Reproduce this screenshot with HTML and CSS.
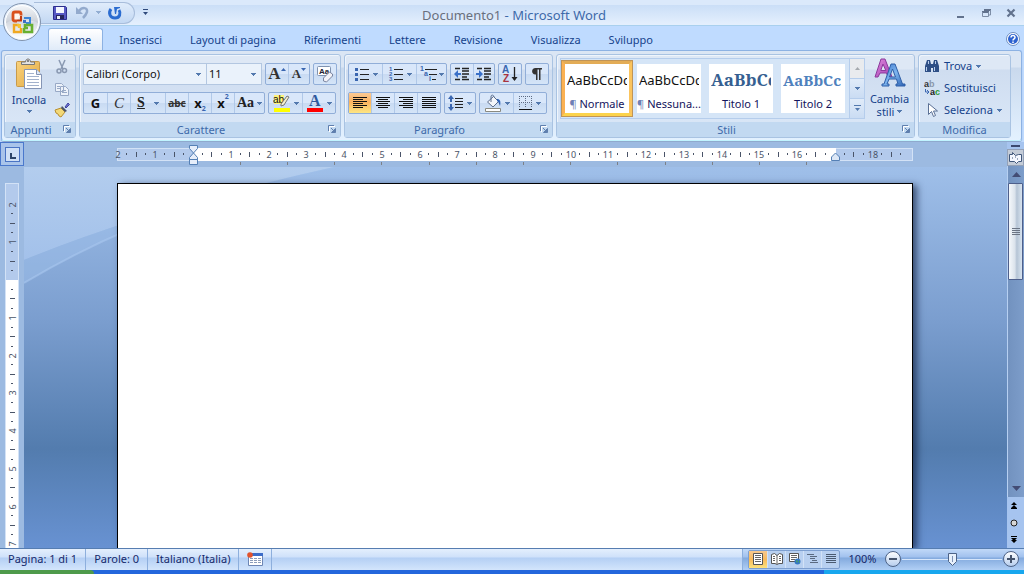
FILE: index.html
```html
<!DOCTYPE html>
<html lang="it">
<head>
<meta charset="utf-8">
<title>Documento1 - Microsoft Word</title>
<link rel="stylesheet" href="styles.css">
</head>
<body>
<svg class="defs" aria-hidden="true">
  <defs>
    <symbol id="caret" viewBox="0 0 5 3"><path d="M0 0h5v1H4v1H3v1H2V2H1V1H0z" fill="#5379ae"/></symbol>
    <symbol id="launch" viewBox="0 0 8 8"><path d="M.5 6V.5H6" fill="none" stroke="#5f7fae"/><path d="M1.500 7V1.500H7" fill="none" stroke="#fff"/><path d="M3 3l2 2M7.500 3.500v4h-4z" fill="#5f7fae" stroke="#5f7fae"/></symbol>
    <linearGradient id="orb" x2="0" y2="1"><stop offset="0" stop-color="#f4f6f9"/><stop offset=".48" stop-color="#cdd2da"/><stop offset=".52" stop-color="#b4bcc8"/><stop offset="1" stop-color="#fff"/></linearGradient>
    <linearGradient id="knob" x2="0" y2="1"><stop offset="0" stop-color="#fff"/><stop offset="1" stop-color="#b5cdee"/></linearGradient>
    <linearGradient id="swoosh" x2="0" y2="1"><stop offset="0" stop-color="#b3cdee"/><stop offset="1" stop-color="#a3c1ea"/></linearGradient>
    <linearGradient id="clip" x2="1" y2="1"><stop offset="0" stop-color="#f9d27e"/><stop offset="1" stop-color="#e2ab45"/></linearGradient>
    <linearGradient id="letterP" x2="1" y2="1"><stop offset="0" stop-color="#e089de"/><stop offset="1" stop-color="#a03fb0"/></linearGradient>
    <linearGradient id="letterB" x2="1" y2="1"><stop offset="0" stop-color="#3d77cc"/><stop offset=".5" stop-color="#7db4ee"/><stop offset="1" stop-color="#2c62b4"/></linearGradient>
  </defs>
</svg>

<header class="titlebar">
  <button class="orb" aria-label="Pulsante Office">
    <svg width="40" height="40" viewBox="0 0 40 40">
      <circle cx="20" cy="20" r="18.500" fill="#e8f1fc" stroke="#8193ad"/>
      <circle cx="20" cy="20" r="16.500" fill="url(#orb)" stroke="#fff"/>
      <path d="M3 21c9-4 25-4 34 0a17 17 0 0 1-34 0z" fill="#fff" opacity=".45"/>
      <path d="M19 13.500V12q0-2-2-2h-4q-2 0-2 2v5q0 2 2 2h2" fill="#fff6ee" stroke="#d9501c" stroke-width="2.800"/>
      <path d="M15 18.500h4V14" fill="none" stroke="#c23c12" stroke-width="2"/>
      <path d="M22 16h6v5h-4" fill="none" stroke="#3d86d8" stroke-width="2"/>
      <path d="M21 18h3v3h-3z" fill="#3d6fc4"/>
      <path d="M17 23h-5v7h7v-4" fill="none" stroke="#f0a821" stroke-width="2.400"/>
      <path d="M15 22h4v4h-3z" fill="#f6c430"/>
      <path d="M22 26v4h8v-7h-7v3h3" fill="none" stroke="#68b030" stroke-width="2.600"/>
    </svg>
  </button>
  <div class="quick">
    <div class="quick-pill">
      <button aria-label="Salva"><svg width="16" height="16" viewBox="0 0 16 16"><path d="M1.500 1.500h12l1 1v12h-13z" fill="#5658c4" stroke="#2c2e8e"/><path d="M4 2h8v6H4z" fill="#f3f6ff"/><path d="M4 10h8v4H4z" fill="#25255c"/><path d="M5 11h3v3H5z" fill="#e7ebf5"/></svg></button>
      <button aria-label="Annulla"><svg width="16" height="16" viewBox="0 0 16 16"><path d="M5 6c3-4 9-4 8 1-1 3-2 4-4 6" fill="none" stroke="#93aacd" stroke-width="2.500"/><path d="M2 2v7h7z" fill="#93aacd"/></svg></button>
      <svg class="caret pale" width="5" height="3"><use href="#caret"/></svg>
      <button aria-label="Ripeti"><svg width="16" height="16" viewBox="0 0 16 16"><path d="M4 4c-3 4-1 9 4 9 5 0 6-5 4-8" fill="none" stroke="#2b6cd0" stroke-width="3"/><path d="M7 2h6v1l-3 1-1 5H8z" fill="#2b6cd0"/></svg></button>
    </div>
    <button class="customize" aria-label="Personalizza"><svg width="7" height="7" viewBox="0 0 7 7"><path d="M1 0h5v1H1zM1 3h5L3.500 6z" fill="#2f4a7c"/></svg></button>
  </div>
  <h1 class="title"><span class="doc">Documento1</span> - Microsoft Word</h1>
  <div class="window-buttons">
    <button aria-label="Riduci a icona"><svg width="10" height="12" viewBox="0 0 10 12"><path d="M1 9h7v2H1z" fill="#62728d"/></svg></button>
    <button aria-label="Ripristina"><svg width="10" height="12" viewBox="0 0 10 12"><path d="M3 2h7v2H3zM1 4h7v2H1z" fill="#62728d"/><path d="M9.500 3v5H8M1.500 5v4.500h6V5" fill="none" stroke="#7d8da6"/></svg></button>
    <button aria-label="Chiudi"><svg width="10" height="12" viewBox="0 0 10 12"><path d="M1.500 2.500l7 7M8.500 2.500l-7 7" stroke="#62728d" stroke-width="2.200"/></svg></button>
  </div>
</header>

<nav class="tabs">
  <a class="tab active" href="#home">Home</a>
  <a class="tab" href="#inserisci">Inserisci</a>
  <a class="tab" href="#layout">Layout di pagina</a>
  <a class="tab" href="#riferimenti">Riferimenti</a>
  <a class="tab" href="#lettere">Lettere</a>
  <a class="tab" href="#revisione">Revisione</a>
  <a class="tab" href="#visualizza">Visualizza</a>
  <a class="tab" href="#sviluppo">Sviluppo</a>
  <button class="help" aria-label="Guida"><svg width="14" height="14" viewBox="0 0 14 14"><circle cx="7" cy="7" r="6.500" fill="#fff" stroke="#6f8fc0"/><circle cx="7" cy="7" r="5" fill="#2d62cf"/><path d="M5 5.500c0-3 4.200-2.500 4 0C9 7 7 6.800 7 8.500M7 9.500V11" fill="none" stroke="#fff" stroke-width="1.500"/></svg></button>
</nav>

<div class="ribbon" id="home">
  <section class="group clipboard">
    <div class="content">
      <button class="paste">
        <svg width="28" height="32" viewBox="0 0 28 32"><rect x="1.500" y="3.500" width="23" height="25" rx="1" fill="url(#clip)" stroke="#c89a4a"/><path d="M6.500 6.500V4h4c0-4 5-4 5 0h4v2.500z" fill="#e2e2e2" stroke="#777"/><circle cx="13" cy="3" r="1" fill="#666"/><path d="M9.500 11.500h12l5 5v14h-17z" fill="#fff" stroke="#8595b5"/><path d="M21.500 11.500v5h5" fill="#dfe8f6" stroke="#8595b5"/><path d="M12 15.500h7M12 18.500h12M12 21.500h12M12 24.500h12M12 27.500h12" stroke="#a3b2cc"/></svg>
        <span>Incolla</span>
        <svg class="caret" width="5" height="3"><use href="#caret"/></svg>
      </button>
      <div class="clip-tools">
        <button aria-label="Taglia"><svg width="14" height="16" viewBox="0 0 14 16"><path d="M4 1l4 9M10 1L6 10" stroke="#8998b1" stroke-width="1.500"/><circle cx="4" cy="12" r="2" fill="none" stroke="#8998b1" stroke-width="1.500"/><circle cx="9.500" cy="11.500" r="2" fill="none" stroke="#8998b1" stroke-width="1.500"/></svg></button>
        <button aria-label="Copia"><svg width="16" height="16" viewBox="0 0 16 16"><path d="M1.500 2.500h6l2 2v6h-8zM6.500 5.500h5l3 3v6h-8z" fill="#edf2fa" stroke="#98a9c6"/><path d="M3 5.500h3M3 7.500h3M8 9.500h4M8 11.500h5" stroke="#98a9c6"/></svg></button>
        <button aria-label="Copia formato"><svg width="16" height="16" viewBox="0 0 16 16"><path d="M1 8l6-2 4 4-4 5-2-1-1-2-2-1z" fill="#f2d878" stroke="#b98f30"/><path d="M8 4l5 5-2 1-4-4z" fill="#4c5568"/><path d="M11 5l3-4 1.500 1.500L12 6z" fill="#6a6fd0" stroke="#4145a0"/></svg></button>
      </div>
    </div>
    <h2 class="with-launcher"><span>Appunti</span><button class="launcher" aria-label="Opzioni Appunti"><svg width="8" height="8"><use href="#launch"/></svg></button></h2>
  </section>

  <section class="group font">
    <div class="content rows">
      <div class="row">
        <div class="combos">
          <label class="combo family"><select aria-label="Tipo di carattere"><option>Calibri (Corpo)</option></select><svg class="caret" width="5" height="3"><use href="#caret"/></svg></label>
          <label class="combo size"><select aria-label="Dimensione carattere"><option>11</option></select><svg class="caret" width="5" height="3"><use href="#caret"/></svg></label>
        </div>
        <div class="set">
          <button class="b22 serif big" aria-label="Ingrandisci carattere">A<svg width="5" height="12" viewBox="0 0 5 12"><path d="M0 3L2.500 0 5 3z" fill="#3a66b0"/></svg></button>
          <button class="b21 serif mid" aria-label="Riduci carattere">A<svg width="5" height="12" viewBox="0 0 5 12"><path d="M0 0h5L2.500 3z" fill="#3a66b0"/></svg></button>
        </div>
        <div class="set">
          <button class="b22" aria-label="Cancella formattazione"><svg width="18" height="18" viewBox="0 0 18 18"><rect x="1.500" y="1.500" width="13" height="9" rx="1" fill="#fff" stroke="#8093b0"/><text x="3" y="9" font-size="8" font-weight="bold" font-family="Liberation Sans" fill="#223">Aa</text><path d="M7.500 13l6-6 3 2v2l-6 6-3-1z" fill="#f2f2f8" stroke="#7a84a0"/></svg></button>
        </div>
      </div>
      <div class="row">
        <div class="set">
          <button class="b23 bold" aria-label="Grassetto">G</button>
          <button class="b23 italic" aria-label="Corsivo">C</button>
          <button class="b35 under" aria-label="Sottolineato"><u>S</u><svg class="caret" width="5" height="3"><use href="#caret"/></svg></button>
          <button class="b23 strike" aria-label="Barrato"><s>abc</s></button>
          <button class="b23 script" aria-label="Pedice">x<sub>2</sub></button>
          <button class="b23 script" aria-label="Apice">x<sup>2</sup></button>
          <button class="b30 case" aria-label="Maiuscole/minuscole">Aa<svg class="caret" width="5" height="3"><use href="#caret"/></svg></button>
        </div>
        <div class="set">
          <button class="b33" aria-label="Evidenziatore"><svg width="18" height="18" viewBox="0 0 18 18"><path d="M1 1h10v9H1z" fill="#fff27a"/><text x="0" y="9" font-size="10" font-family="Liberation Sans" fill="#111">ab</text><path d="M8 10l6-8 2 1-5 8-3 1z" fill="#f5f1d0" stroke="#777"/><path d="M1 14h16v4H1z" fill="#ff0"/></svg><svg class="caret" width="5" height="3"><use href="#caret"/></svg></button>
          <button class="b33" aria-label="Colore carattere"><svg width="18" height="18" viewBox="0 0 18 18"><text x="3" y="12" font-size="16" font-weight="bold" font-family="Liberation Serif" fill="#2f5a9e">A</text><path d="M1 14h16v4H1z" fill="#f00"/></svg><svg class="caret" width="5" height="3"><use href="#caret"/></svg></button>
        </div>
      </div>
    </div>
    <h2 class="with-launcher"><span>Carattere</span><button class="launcher" aria-label="Opzioni Carattere"><svg width="8" height="8"><use href="#launch"/></svg></button></h2>
  </section>

  <section class="group para">
    <div class="content rows">
      <div class="row">
        <div class="set">
          <button class="b33" aria-label="Elenchi puntati"><svg width="16" height="16" viewBox="0 0 16 16"><path d="M1 2h3v3H1zM1 7h3v3H1zM1 12h3v3H1z" fill="#3a66b0"/><path d="M6 3.500h9M6 8.500h9M6 13.500h9" stroke="#222"/></svg><svg class="caret" width="5" height="3"><use href="#caret"/></svg></button>
          <button class="b34" aria-label="Elenchi numerati"><svg width="16" height="16" viewBox="0 0 16 16"><g font-size="6" font-weight="bold" font-family="Liberation Sans" fill="#3a66b0"><text x="1" y="5">1</text><text x="1" y="10">2</text><text x="1" y="15">3</text></g><path d="M6 3.500h9M6 8.500h9M6 13.500h9" stroke="#222"/></svg><svg class="caret" width="5" height="3"><use href="#caret"/></svg></button>
          <button class="b30 tight" aria-label="Elenco a più livelli"><svg width="18" height="16" viewBox="0 0 18 16"><g font-size="7" font-weight="bold" font-family="Liberation Sans" fill="#3a66b0"><text x="0" y="5">1</text><text x="4" y="10">a</text><text x="9" y="15">i</text></g><path d="M5 3.500h12M9 8.500h8M12 13.500h4" stroke="#222"/></svg><svg class="caret" width="5" height="3"><use href="#caret"/></svg></button>
        </div>
        <div class="set">
          <button class="b22" aria-label="Riduci rientro"><svg width="16" height="16" viewBox="0 0 16 16"><path d="M1 2.500h5M8 2.500h7M8 5h7M8 8h7M8 11h5M1 13.500h5M8 13.500h7" stroke="#222" stroke-width="1.500"/><path d="M0 8l4-4v3h3v2H4v3z" fill="#3a70c8"/></svg></button>
          <button class="b21" aria-label="Aumenta rientro"><svg width="16" height="16" viewBox="0 0 16 16"><path d="M1 2.500h5M8 2.500h7M8 5h7M8 8h7M8 11h5M1 13.500h5M8 13.500h7" stroke="#222" stroke-width="1.500"/><path d="M7 8L3 4v3H0v2h3v3z" fill="#3a70c8"/></svg></button>
        </div>
        <div class="set">
          <button class="b22" aria-label="Ordina"><svg width="16" height="18" viewBox="0 0 16 18"><g font-size="10" font-weight="bold" font-family="Liberation Sans"><text x="0" y="8" fill="#3a66b0">A</text><text x="1" y="17" fill="#a83240">Z</text></g><path d="M12.500 2v13" stroke="#222" stroke-width="1.300"/><path d="M9.500 12h6l-3 4z" fill="#222"/></svg></button>
        </div>
        <div class="set">
          <button class="b22" aria-label="Mostra tutto"><svg width="14" height="14" viewBox="0 0 14 14"><path d="M12 1H5.500C1 1 1 7.500 5.500 7.500H6V13h1.500V2.500H9V13h1.500V2.500H12z" fill="#333"/></svg></button>
        </div>
      </div>
      <div class="row">
        <div class="set">
          <button class="b22 on" aria-label="Allinea a sinistra"><svg width="14" height="14" viewBox="0 0 14 14"><path d="M0 1.500h14M0 3.500h10M0 5.500h14M0 7.500h10M0 9.500h14M0 11.500h10" stroke="#111"/></svg></button>
          <button class="b23" aria-label="Centra"><svg width="14" height="14" viewBox="0 0 14 14"><path d="M0 1.500h14M2 3.500h10M0 5.500h14M2 7.500h10M0 9.500h14M2 11.500h10" stroke="#111"/></svg></button>
          <button class="b23" aria-label="Allinea a destra"><svg width="14" height="14" viewBox="0 0 14 14"><path d="M0 1.500h14M4 3.500h10M0 5.500h14M4 7.500h10M0 9.500h14M4 11.500h10" stroke="#111"/></svg></button>
          <button class="b23" aria-label="Giustifica"><svg width="14" height="14" viewBox="0 0 14 14"><path d="M0 1.500h14M0 3.500h14M0 5.500h14M0 7.500h14M0 9.500h14M0 11.500h14" stroke="#111"/></svg></button>
        </div>
        <div class="set">
          <button class="b30" aria-label="Interlinea"><svg width="16" height="16" viewBox="0 0 16 16"><path d="M3 0l3 4H4v3H2V4H0zM3 16l3-4H4V9H2v3H0z" fill="#3a66b0"/><path d="M7 3.500h8M7 6.500h8M7 9.500h8M7 12.500h8" stroke="#222"/></svg><svg class="caret" width="5" height="3"><use href="#caret"/></svg></button>
        </div>
        <div class="set">
          <button class="b33" aria-label="Sfondo"><svg width="18" height="18" viewBox="0 0 18 18"><path d="M3.500 8l6-5.500 5 5L9 13z" fill="#f4f6fa" stroke="#5c6d8c"/><path d="M7 8V3c0-3 3-2 3 0" fill="none" stroke="#5c6d8c"/><path d="M13 5c3 0 4 2 3 7-1-2-1-4-3-5z" fill="#2f62b5"/><path d="M1.500 14.500h15v3h-15z" fill="#fff" stroke="#8a8a80"/></svg><svg class="caret" width="5" height="3"><use href="#caret"/></svg></button>
          <button class="b33" aria-label="Bordi"><svg width="14" height="14" viewBox="0 0 14 14"><path d="M.5 0v12M6.500 0v12M12.500 0v12M0 .5h13M0 6.500h13" stroke="#5c6b84" stroke-dasharray="1 1"/><path d="M0 13.500h13" stroke="#111"/></svg><svg class="caret" width="5" height="3"><use href="#caret"/></svg></button>
        </div>
      </div>
    </div>
    <h2 class="with-launcher"><span>Paragrafo</span><button class="launcher" aria-label="Opzioni Paragrafo"><svg width="8" height="8"><use href="#launch"/></svg></button></h2>
  </section>

  <section class="group styles">
    <div class="content">
      <div class="gallery">
        <button class="style selected"><span class="sample">AaBbCcDd</span><span class="name"><i>¶</i> Normale</span></button>
        <button class="style"><span class="sample">AaBbCcDd</span><span class="name"><i>¶</i> Nessuna...</span></button>
        <button class="style"><span class="sample heading one">AaBbCc</span><span class="name">Titolo 1</span></button>
        <button class="style"><span class="sample heading two">AaBbCc</span><span class="name">Titolo 2</span></button>
        <div class="gallery-nav">
          <button class="off" aria-label="Riga precedente"><svg width="5" height="3" viewBox="0 0 5 3"><path d="M0 3L2.500 0 5 3z" fill="#a5a9ae"/></svg></button>
          <button aria-label="Riga successiva"><svg width="5" height="3"><use href="#caret"/></svg></button>
          <button aria-label="Altro"><svg width="7" height="7" viewBox="0 0 7 7"><path d="M0 0h7v1H0zM1 3h5L3.500 6z" fill="#5379ae"/></svg></button>
        </div>
      </div>
      <button class="change">
        <svg width="32" height="30" viewBox="0 0 32 30"><path fill-rule="evenodd" d="M7 1h4l7 18h-4l-1.500-4H6l-2 4H1zM9 6l-2.200 6.500h5z" fill="url(#letterP)" stroke="#8c3a9c"/><path fill-rule="evenodd" d="M17 6h4l7.500 20H31v2h-9v-2h2l-1.500-5h-7.500l-2 5h2v2H8v-2h2zM18.500 11L15.500 19h6z" fill="url(#letterB)" stroke="#2f5fa8"/></svg>
        <span>Cambia</span>
        <span>stili <svg class="caret" width="5" height="3"><use href="#caret"/></svg></span>
      </button>
    </div>
    <h2 class="with-launcher"><span>Stili</span><button class="launcher" aria-label="Opzioni Stili"><svg width="8" height="8"><use href="#launch"/></svg></button></h2>
  </section>

  <section class="group edit">
    <div class="content edit-list">
      <button><svg width="16" height="16" viewBox="0 0 16 16"><path d="M3 2h3l1 4v8H1V8zM10 2h3l2 6v6H9V6z" fill="#2e4f86"/><path d="M7 6h2v4H7z" fill="#2e4f86"/><path d="M2.500 9v4M10.500 9v4M4.500 3v3M11.500 3v3" stroke="#b9cdec"/></svg>Trova<svg class="caret" width="5" height="3"><use href="#caret"/></svg></button>
      <button><svg width="16" height="16" viewBox="0 0 16 16"><g font-size="9" font-weight="bold" font-family="Liberation Sans"><text x="0" y="7" fill="#333">a</text><text x="5" y="7" fill="#8a97aa">b</text><text x="6" y="15" fill="#222">a</text><text x="11" y="15" fill="#2d9b36">c</text></g><path d="M1.500 9v3h3M3 10l2 2-2 2" fill="none" stroke="#3a66b0"/></svg>Sostituisci</button>
      <button><svg width="16" height="16" viewBox="0 0 16 16"><path d="M4.500 1.500v11l3-3 2 5 2-1-2-4.500h4z" fill="#fff" stroke="#5b7095"/></svg>Seleziona<svg class="caret" width="5" height="3"><use href="#caret"/></svg></button>
    </div>
    <h2><span>Modifica</span></h2>
  </section>
</div>

<main class="workspace">
  <div class="ruler-row">
    <button class="tab-stop" aria-label="Tabulazione"><svg width="15" height="15" viewBox="0 0 15 15"><rect x=".5" y=".5" width="14" height="14" fill="#cfe0f6" stroke="#4a74c4"/><path d="M6 6v5h5" fill="none" stroke="#2c4468" stroke-width="2"/></svg></button>
    <div class="ruler-h">
      <svg id="ruler-h" width="796" height="25" viewBox="0 0 796 25">
        <rect x=".5" y="6.500" width="795" height="12" fill="#b3caec" stroke="#d3e2f6"/>
        <rect x="76" y="6" width="643" height="13" fill="#fff"/>
        <g class="marks"></g>
        <path d="M72.500 3.500h8v3l-4 4.500-4-4.500zM76.500 11l4 4.500v2h-8v-2zM72.500 17.500h8v5h-8z" fill="#e6eefa" stroke="#5580b5"/>
        <path d="M718.500 11l4 4v3.500h-8V15z" fill="#dce7f6" stroke="#5580b5"/>
      </svg>
    </div>
  </div>
  <div class="ruler-v">
    <svg id="ruler-v" width="14" height="365" viewBox="0 0 14 365">
      <rect x=".5" y=".5" width="13" height="380" fill="#b3caec" stroke="#d3e2f6"/>
      <rect x="1" y="97" width="12" height="300" fill="#fff"/>
      <g class="marks"></g>
    </svg>
  </div>
  <div class="canvas">
    <svg class="swoosh" width="320" height="120" viewBox="0 0 320 120" aria-hidden="true">
      <path d="M0 0h310Q130 40 0 93z" fill="url(#swoosh)"/>
      <path d="M0 93Q130 40 310 0H320Q150 28 0 116z" fill="#a0c0ea" opacity=".45"/>
      <path d="M0 116Q80 68 170 38" fill="none" stroke="#a8c6ee" stroke-width="2" opacity=".6"/>
    </svg>
    <article class="page" contenteditable="true" aria-label="Documento"></article>
  </div>
  <aside class="scroll">
    <button class="split" aria-label="Dividi"><svg width="9" height="2"><path d="M0 0h9v2H0z" fill="#3c4a70"/></svg></button>
    <button class="ruler-toggle" aria-label="Righello"><svg width="13" height="12" viewBox="0 0 13 12"><path d="M.5 2.500h3v-2l3 3 3-1h3v7h-3l-2 2-2-2h-5z" fill="#f4f7ff" stroke="#41587c"/><path d="M3 6h1M6 5h1M8 7h1" stroke="#41587c"/></svg></button>
    <div class="track">
      <button aria-label="Su"><svg width="9" height="5" viewBox="0 0 9 5"><path d="M0 5l4.500-5L9 5z" fill="#434c74"/></svg></button>
      <div class="thumb"><svg width="8" height="8" viewBox="0 0 8 8"><path d="M0 .5h8M0 2.500h8M0 4.500h8M0 6.500h8" stroke="#6c7584"/></svg></div>
      <button class="down" aria-label="Giù"><svg width="9" height="5" viewBox="0 0 9 5"><path d="M0 0h9L4.500 5z" fill="#434c74"/></svg></button>
    </div>
    <button class="browse" aria-label="Pagina precedente"><svg width="6" height="8" viewBox="0 0 6 8"><path d="M3 0l3 3H0zM3 3l3 3H0zM0 6h6v1H0z"/></svg></button>
    <button class="browse" aria-label="Seleziona oggetto"><svg width="8" height="8" viewBox="0 0 8 8"><circle cx="4" cy="4" r="3" fill="#d6d6d6" stroke="#222"/></svg></button>
    <button class="browse" aria-label="Pagina successiva"><svg width="6" height="8" viewBox="0 0 6 8"><path d="M0 0h6v1H0zM0 2h6L3 5zM0 4h6L3 7z"/></svg></button>
  </aside>
</main>

<footer class="status">
  <div class="status-left">
    <button>Pagina: 1 di 1</button>
    <button>Parole: 0</button>
    <button>Italiano (Italia)</button>
    <button aria-label="Macro"><svg width="16" height="14" viewBox="0 0 16 14"><path d="M1.500 1.500h14v12h-14z" fill="#fff" stroke="#6d86b5"/><path d="M2 1h14v3H2z" fill="#3c6cc8"/><path d="M3 6.500h3M7 6.500h3M11 6.500h3M3 8.500h3M7 8.500h3M11 8.500h3M3 10.500h3M7 10.500h3M11 10.500h3" stroke="#8b9cba"/><circle cx="3" cy="3" r="2.800" fill="#e2532c"/></svg></button>
  </div>
  <div class="status-right">
    <div class="views">
      <button class="on" aria-label="Layout di stampa"><svg width="12" height="12" viewBox="0 0 12 12"><path d="M1.500.5h9v11h-9z" fill="#fff" stroke="#555"/><path d="M3 2.500h6M3 4.500h6M3 6.500h6M3 8.500h6" stroke="#666"/></svg></button>
      <button aria-label="Lettura a schermo intero"><svg width="12" height="12" viewBox="0 0 12 12"><path d="M.5 1.500l3-1 2.500 2 2.500-2 3 1v9H8l-2 1-2-1H.5z" fill="#fff" stroke="#555"/><path d="M6 2v9M2 3.500h2M2 5.500h2M2 7.500h2M8 3.500h2M8 5.500h2M8 7.500h2" stroke="#666"/></svg></button>
      <button aria-label="Layout Web"><svg width="12" height="12" viewBox="0 0 12 12"><path d="M.5.500h9v8h-9z" fill="#fff" stroke="#555"/><path d="M2 2.500h6M2 4.500h6M2 6.500h4" stroke="#666"/><circle cx="8.500" cy="8.500" r="3" fill="#3477c4"/><path d="M7 7l2 1-1 2zM10 7l1 2-1 1z" fill="#4fae4a"/></svg></button>
      <button aria-label="Struttura"><svg width="12" height="12" viewBox="0 0 12 12"><path d="M0 1.500h7M3 3.500h7M3 5.500h5M5 7.500h5M3 9.500h8" stroke="#5a6a80"/></svg></button>
      <button aria-label="Bozza"><svg width="12" height="12" viewBox="0 0 12 12"><path d="M1 1.500h10M1 3.500h10M1 5.500h10M1 7.500h10M1 9.500h10" stroke="#4a5a70"/></svg></button>
    </div>
    <button class="percent">100%</button>
    <button class="round" aria-label="Zoom indietro"><svg width="16" height="16" viewBox="0 0 16 16"><circle cx="8" cy="8" r="7.500" fill="url(#knob)" stroke="#4d6387"/><path d="M4 8h8" stroke="#44536c" stroke-width="2"/></svg></button>
    <input class="zoom" type="range" min="0" max="100" value="50" aria-label="Zoom">
    <button class="round" aria-label="Zoom avanti"><svg width="16" height="16" viewBox="0 0 16 16"><circle cx="8" cy="8" r="7.500" fill="url(#knob)" stroke="#4d6387"/><path d="M4 8h8M8 4v8" stroke="#44536c" stroke-width="2"/></svg></button>
  </div>
</footer>
<div class="taskbar"><span class="start"></span><span class="tray"></span></div>
<script src="ruler.js"></script>
</body>
</html>
```

FILE: styles.css
```css
* { box-sizing: border-box; }

body {
  margin: 0;
  min-height: 100vh;
  display: flex;
  flex-direction: column;
  background: #bfdbff;
  color: #15428b;
  font: 11px/14px "Noto Sans", "Open Sans", sans-serif;
}

button {
  margin: 0;
  padding: 0;
  border: 0;
  background: none;
  color: inherit;
  font: inherit;
  display: flex;
  align-items: center;
  justify-content: center;
}

svg { display: block; flex: none; }
.defs { position: absolute; width: 0; height: 0; }
.pale { opacity: .5; }

/* title bar */
.titlebar {
  position: relative;
  height: 26px;
  display: grid;
  grid-template-columns: 1fr auto 1fr;
  align-items: center;
  background: linear-gradient(#dbe9fb 0 5px, #cadef7 5px, #e4effd 24px);
  border-bottom: 1px solid #a9d0ee;
}
.orb { position: absolute; left: 2px; top: 2px; z-index: 2; }
.quick { display: flex; align-items: center; gap: 4px; padding-left: 34px; }
.quick-pill {
  display: flex;
  align-items: center;
  gap: 6px;
  height: 22px;
  padding: 0 11px 0 18px;
  border: 1px solid #a8bddb;
  border-left: 0;
  border-radius: 0 11px 11px 0;
  background: linear-gradient(#e0ecfb, #c3d8f3);
}
.customize { width: 12px; height: 16px; }
.title { margin: 0; padding: 4px 0 0 4px; font-size: 13px; line-height: 18px; font-weight: 400; color: #3e6aaa; }
.title .doc { color: #69707e; }
.window-buttons { display: flex; justify-content: flex-end; gap: 15px; padding-right: 8px; }

/* tab strip */
.tabs { display: flex; height: 24px; padding: 2px 4px 0 48px; }
.tab { padding: 5px 14px 0; color: inherit; text-decoration: none; }
.tab.active {
  margin-right: 2px;
  padding: 4px 11px 0;
  border: 1px solid #8db2e3;
  border-bottom: 0;
  border-radius: 3px 3px 0 0;
  background: linear-gradient(#fff, #e0ebf9);
}
.help { margin-left: auto; align-self: center; }

/* ribbon */
.ribbon {
  display: flex;
  gap: 3px;
  margin: 0 2px 0 1px;
  padding: 3px 2px 2px;
  border: 1px solid #8db2e3;
  border-bottom-color: #c0f4ff;
  border-radius: 3px;
  background: linear-gradient(#dbe6f4 0 16px, #c9d9ed 17px, #e3f1ff);
  box-shadow: 0 1px 1px #8aa3c8;
}
.group {
  display: flex;
  flex-direction: column;
  border: 1px solid #a9c3e2;
  border-radius: 3px;
  background: linear-gradient(#dee8f5 0 14px, #cfddf0 15px, #dbe8f8);
  box-shadow: inset 1px 1px 0 #eff5fc;
}
.content { height: 67px; display: flex; padding: 3px; }
.group h2 {
  position: relative;
  height: 15px;
  margin: 0;
  background: #c2d9f1;
  color: #3e6aaa;
  font-size: 11px;
  line-height: 15px;
  font-weight: 400;
  text-align: center;
}
.group .with-launcher { padding-right: 18px; }
.launcher { position: absolute; right: 3px; top: 2px; width: 10px; height: 10px; }
.clipboard { width: 72px; }
.paste { flex-direction: column; width: 42px; gap: 3px; justify-content: flex-start; }
.clip-tools { display: flex; flex-direction: column; justify-content: space-between; padding-left: 4px; }
.clip-tools button { width: 16px; height: 18px; }

.rows { flex-direction: column; gap: 7px; padding: 8px 3px; }
.row { display: flex; gap: 3px; }
.set {
  display: flex;
  height: 22px;
  border: 1px solid #91aed8;
  border-radius: 2px;
  background: linear-gradient(#d9e7fa 0 10px, #c8daf2 10px, #d5e5f8);
}
.set button { gap: 3px; }
.set button + button { border-left: 1px solid #b0c8e8; }
.b21 { width: 21px; }
.b22 { width: 22px; }
.b23 { width: 23px; }
.b30 { width: 30px; }
.b33 { width: 33px; }
.b34 { width: 34px; }
.b35 { width: 35px; }
.set .tight { gap: 1px; }
.set .on { background: linear-gradient(#fbc994, #fbb25e 45%, #fde683); }
.combos { display: flex; }
.combo {
  display: flex;
  align-items: center;
  height: 22px;
  padding-right: 5px;
  border: 1px solid #b3c7e1;
  background: #eaf2fb;
}
.combo + .combo { border-left: 0; }
.combo select {
  flex: 1;
  min-width: 0;
  padding: 0 2px;
  border: 0;
  appearance: none;
  background: none;
  color: #111;
  font: inherit;
}
.family { width: 124px; }
.size { width: 55px; }
.serif { color: #333; font-family: "Liberation Serif", serif; font-weight: 700; }
.set .serif { gap: 0; }
.big { font-size: 17px; }
.mid { font-size: 13px; }
.bold { color: #111; font: 700 13px/16px "Open Sans", sans-serif; }
.italic { color: #333; font: italic 15px/16px "Liberation Serif", serif; }
.under { color: #222; font: 700 14px/16px "Liberation Serif", serif; }
.set .under { gap: 9px; }
.strike { color: #333; font-size: 10px; font-weight: 700; }
.script { color: #111; font-size: 13px; font-weight: 700; }
.set .script { gap: 0; }
.script sub, .script sup { color: #3a66b0; font-size: 7px; line-height: 8px; }
.script sub { align-self: flex-end; }
.script sup { align-self: flex-start; }
.case { color: #222; font: 700 14px/16px "Liberation Serif", serif; }

/* styles gallery */
.styles .content { gap: 3px; }
.gallery { display: flex; height: 61px; border: 1px solid #b5cdec; background: #d5e5f7; }
.style {
  flex-direction: column;
  justify-content: space-between;
  width: 72px;
  margin: 1px 0;
  padding: 6px 2px 2px;
  border: 4px solid transparent;
  background: #fff padding-box;
  overflow: hidden;
}
.style.selected {
  border-color: #e3ac56 #fbc45d #fcd34b #fbb152;
  outline: 1px solid #c09457;
  outline-offset: -1px;
}
.sample { align-self: flex-start; max-width: 60px; overflow: hidden; color: #111; font-size: 13px; line-height: 20px; white-space: nowrap; }
.heading { font: 700 17px/20px "Noto Serif", "Liberation Serif", serif; }
.one { color: #365f91; }
.two { color: #4f81bd; font-size: 15px; }
.name { color: #14145c; white-space: nowrap; }
.name i { color: #6f7fb5; font-style: normal; }
.gallery-nav { display: flex; flex-direction: column; width: 15px; border-left: 1px solid #b5cdec; }
.gallery-nav button { flex: 1; background: linear-gradient(#e0ebf9, #cadcf3); }
.gallery-nav button + button { border-top: 1px solid #b5cdec; }
.gallery-nav .off { background: #e9ebee; }
.change { flex-direction: column; width: 43px; justify-content: flex-start; }
.change span { display: flex; align-items: center; gap: 3px; line-height: 13px; }
.change svg + span { padding-top: 4px; }

.edit { width: 93px; }
.edit-list { flex-direction: column; justify-content: space-between; padding: 1px 5px 2px; }
.edit-list button { justify-content: flex-start; gap: 4px; height: 20px; }

/* work area */
.workspace {
  flex: 1;
  display: grid;
  grid-template-columns: 24px 1fr 17px;
  grid-template-rows: 25px 1fr;
  margin-top: 1px;
  background: #9cbae1;
}
.ruler-row { grid-column: 1 / 3; display: flex; }
.tab-stop { width: 24px; height: 24px; border: 1px solid #4a78cc; background: #a9c4ea; }
.ruler-h { flex: 1; display: flex; justify-content: center; padding-right: 1px; }
.ruler-h svg { overflow: visible; }
.ruler-v { padding: 16px 0 0 5px; height: 381px; }
.marks text { font: 9px "Noto Sans", sans-serif; fill: #4a5468; text-anchor: middle; }
.marks path { stroke: #4a5468; }
.marks .stops { stroke: #7c8087; }
.canvas {
  position: relative;
  display: flex;
  justify-content: center;
  padding: 16px 1px 0 0;
  background: linear-gradient(#9fbfe9, #7b9ecf 40%, #537cae 74%, #6892d2);
  overflow: hidden;
}
.swoosh { position: absolute; left: 0; top: 0; }
.page {
  position: relative;
  width: 796px;
  border: 1px solid #000;
  border-bottom: 0;
  background: #fff;
  box-shadow: 4px 2px 7px rgba(10, 25, 55, .65);
}
.scroll { grid-column: 3; grid-row: 1 / 3; display: flex; flex-direction: column; background: #a6c4ef; }
.split { height: 7px; }
.ruler-toggle { height: 17px; border: 1px solid #93a1b8; background: #c4ccd8; }
.track {
  flex: 1;
  display: flex;
  flex-direction: column;
  border-left: 1px solid #b7d0f2;
  background: linear-gradient(90deg, #7292bf, #7d9dca);
}
.track button { height: 17px; }
.track .down { margin-top: auto; }
.thumb {
  display: flex;
  align-items: center;
  justify-content: center;
  height: 97px;
  margin-right: 1px;
  border: 1px solid #4e5f8b;
  border-radius: 1px;
  background: linear-gradient(90deg, #f5f8fb, #dbe3ec 45%, #b5c4d5 60%, #d8e4f0);
}
.browse { height: 17px; padding-right: 3px; }

/* status bar */
.status {
  display: flex;
  justify-content: space-between;
  height: 22px;
  border-top: 1px solid #567db1;
  background: linear-gradient(#e4effd, #cfe1fa 8px, #b4cff4 9px, #d3e5fc);
}
.status-left { display: flex; }
.status-left button { padding: 0 8px 2px; border-right: 1px solid #8dafdd; color: #15296b; }
.status-right {
  display: flex;
  align-items: center;
  padding: 0 5px 1px;
  border-left: 1px solid #8dafdd;
  background: linear-gradient(#c1d9f8, #a1c1ee 8px, #83aade 9px, #b1cff5);
}
.views { display: flex; height: 19px; border: 1px solid #7d9fd0; border-radius: 2px; background: #b8d0f0; }
.views button { width: 18px; }
.views button + button { border-left: 1px solid #d2e2f7; }
.views .on { background: linear-gradient(#f5c890, #f7b95a 50%, #fde27d); }
.percent { width: 45px; padding-bottom: 1px; color: #15296b; }
.zoom {
  width: 100px;
  height: 16px;
  margin: 0 1px;
  appearance: none;
  background: linear-gradient(#d6e6fb, #d6e6fb) center / 100% 1px no-repeat;
}
.zoom::-webkit-slider-thumb {
  appearance: none;
  width: 9px;
  height: 13px;
  background: url("data:image/svg+xml,%3Csvg xmlns='http://www.w3.org/2000/svg' width='9' height='13'%3E%3Cpath d='M.5.5h8v8l-4 4-4-4z' fill='%23e8f1fc' stroke='%234d6387'/%3E%3Cpath d='M4.500 3v6' stroke='%238093b5'/%3E%3C/svg%3E");
}
.round { width: 16px; height: 16px; }

.taskbar { display: flex; justify-content: space-between; height: 4px; background: #2467dc; }
.start { width: 94px; background: #4e9a4b; border-radius: 0 4px 0 0; }
.tray { width: 200px; background: #18a7ee; }
```

FILE: ruler.js
```js
// Draws centimetre numbers and ticks on both rulers.
const CM = 37.75;

function centimetres(from, to, hidden, origin) {
  let numbers = [], dots = [], halves = [];
  for (let n = from; n < to; n++) {
    if (n !== 0 && !hidden.includes(n)) numbers.push([Math.abs(n), origin + n * CM]);
    dots.push(origin + (n + 0.25) * CM, origin + (n + 0.75) * CM);
    halves.push(origin + (n + 0.5) * CM);
  }
  return { numbers, dots, halves };
}

const snap = v => Math.floor(v) + 0.5;

const h = centimetres(-2, 19, [17], 76);
const inRuler = x => x < 792;
document.querySelector("#ruler-h .marks").innerHTML =
  h.numbers.map(([n, x]) => `<text x="${Math.round(x)}" y="16">${n}</text>`).join("") +
  `<path d="${h.dots.filter(inRuler).map(x => `M${snap(x)} 11v2`).join("")}${h.halves.filter(inRuler).map(x => `M${snap(x)} 10v5`).join("")}"/>` +
  `<path class="stops" d="${Array.from({ length: 13 }, (_, i) => `M${snap(76 + (i + 1) * 47.2)} 20v3`).join("")}"/>`;

const v = centimetres(-2, 8, [], 97);
document.querySelector("#ruler-v .marks").innerHTML =
  v.numbers.map(([n, y]) => `<text transform="translate(11 ${Math.round(y)}) rotate(-90)">${n}</text>`).join("") +
  `<path d="${v.dots.map(y => `M6 ${snap(y)}h2`).join("")}${v.halves.map(y => `M5 ${snap(y)}h5`).join("")}"/>`;
```
